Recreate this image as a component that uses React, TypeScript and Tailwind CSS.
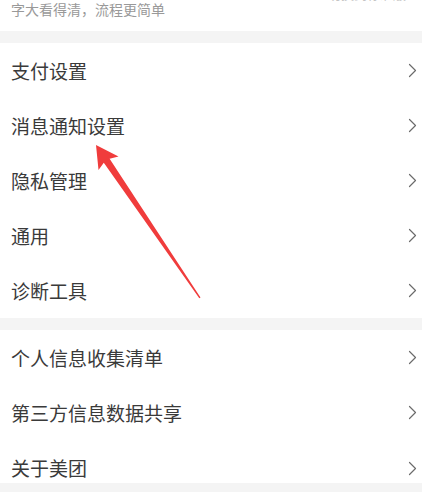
import React from 'react';

const groupOne = ['支付设置', '消息通知设置', '隐私管理', '通用', '诊断工具'];
const groupTwo = ['个人信息收集清单', '第三方信息数据共享'];

const Chevron: React.FC = () => (
  <svg width="9" height="15" viewBox="0 0 9 15" fill="none" className="shrink-0">
    <path d="M1.5 1.5 L7.5 7.5 L1.5 13.5" stroke="#6b6b6b" strokeWidth="1.2" strokeLinecap="round" strokeLinejoin="round" />
  </svg>
);

const Row: React.FC<{ label: string }> = ({ label }) => (
  <div className="flex h-[55px] items-center justify-between bg-white pl-[11px] pr-[5px]">
    <span className="text-[19px] leading-[24px] text-[#3a3a3a]">{label}</span>
    <Chevron />
  </div>
);

export default function App() {
  return (
    <div
      className="relative h-[492px] w-[422px] overflow-hidden bg-[#f4f4f4]"
      style={{ fontFamily: '"Noto Sans CJK SC", "Noto Sans", sans-serif' }}
    >
      {/* header row, cut off at the top */}
      <div className="flex h-[31px] items-start justify-between overflow-hidden bg-white pl-[11px] pr-[8px]">
        <span className="mt-[1px] text-[14px] leading-[16px] text-[#999]">字大看得清，流程更简单</span>
        <div className="-mt-[13px] flex items-center gap-1 text-[13px] leading-[14px] text-[#c4c4c4]">
          <span>切换到标准版</span>
          <span>›</span>
        </div>
      </div>

      <div className="h-[12px]" />

      <div className="flex flex-col">
        {groupOne.map((l) => (
          <Row key={l} label={l} />
        ))}
      </div>

      <div className="h-[12px]" />

      <div className="flex flex-col">
        {groupTwo.map((l) => (
          <Row key={l} label={l} />
        ))}
        <div className="flex h-[43px] items-start justify-between bg-white pl-[11px] pr-[5px] pt-[16px]">
          <span className="text-[19px] leading-[24px] text-[#3a3a3a]">关于美团</span>
          <span className="mt-[5px]">
            <Chevron />
          </span>
        </div>
      </div>

      {/* annotation arrow */}
      <svg className="pointer-events-none absolute left-0 top-0" width="422" height="492" viewBox="0 0 422 492">
        <polygon
          points="96,145 118.5,156.5 109.6,158.7 200.5,297.5 199.3,298.3 103.8,162.7 98.5,170"
          fill="#f03c3c"
        />
      </svg>
    </div>
  );
}
